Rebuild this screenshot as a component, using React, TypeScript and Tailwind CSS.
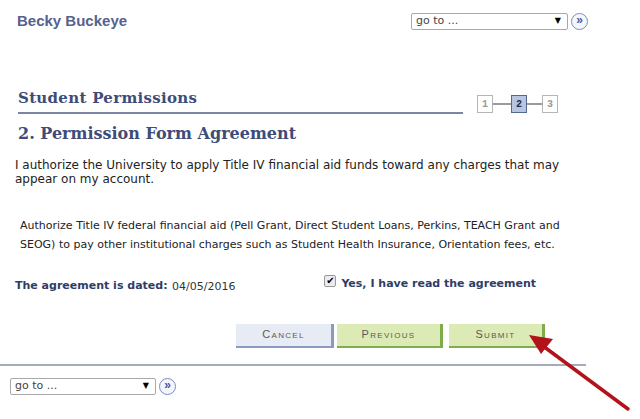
import React from "react";

// PeopleSoft-style permission form, step 2 of 3.

const sans = "font-['DejaVu_Sans',Verdana,sans-serif]";
const serif = "font-['DejaVu_Serif','Liberation_Serif',serif]";

function GoTo({ width }: { width: string }) {
  return (
    <div className="flex items-center gap-[3px]">
      <div
        className={`${width} h-[17px] flex items-center justify-between border border-[#a9a9a9] rounded-[2px] bg-white pl-[4px] pr-[6px] ${sans} text-[11px] text-[#444]`}
      >
        <span>go to ...</span>
        <span className="text-[8px] text-black">▼</span>
      </div>
      <div className="w-[17px] h-[17px] rounded-full border border-[#7b8cc0] bg-[#f4f6fb] flex items-center justify-center text-[#3e5aa8] text-[12px] leading-none font-['Liberation_Sans',sans-serif] font-bold pb-[2px]">
        »
      </div>
    </div>
  );
}

function Steps() {
  const box = "w-[16px] h-[18px] flex items-center justify-center text-[10px] font-bold font-['Liberation_Mono',monospace]";
  return (
    <div className="flex items-center">
      <div className={`${box} border border-[#b5b5b5] text-[#999] bg-white`}>1</div>
      <div className="w-[18px] h-[2px] bg-[#9a9a9a]" />
      <div className={`${box} border border-[#55698f] text-[#1e2d55] bg-[#b7c5e0]`}>2</div>
      <div className="w-[15px] h-[2px] bg-[#9a9a9a]" />
      <div className={`${box} border border-[#b5b5b5] text-[#999] bg-white`}>3</div>
    </div>
  );
}

function Btn({ label, tone }: { label: string; tone: "blue" | "green" }) {
  const cls =
    tone === "blue"
      ? "bg-[#e7ebf3] border-r-[3px] border-b-2 border-[#8d99c4]"
      : "bg-[#dcebb5] border-r-[3px] border-b-2 border-[#7fac4c]";
  return (
    <div
      className={`h-[24px] flex items-center justify-center ${cls} font-['Liberation_Sans',Arial,sans-serif] text-[11px] text-[#5a5a5a] tracking-[0.12em] [font-variant:small-caps]`}
    >
      {label}
    </div>
  );
}

export default function App() {
  return (
    <div className="relative w-[640px] h-[419px] bg-white overflow-hidden">
      {/* Header */}
      <div className="flex items-center justify-between pl-[17px] pr-[52px] pt-[10px]">
        <span className="font-['Liberation_Sans',Arial,sans-serif] font-bold text-[15px] text-[#55628e]">
          Becky Buckeye
        </span>
        <GoTo width="w-[157px]" />
      </div>

      {/* Section title + steps */}
      <div className="flex items-end mt-[54px] pl-[18px]">
        <div className="w-[445px] border-b-2 border-[#7a86a8] pb-[3px]">
          <h1 className={`${serif} font-bold text-[15px] tracking-[0.02em] text-[#3d4c78]`}>
            Student Permissions
          </h1>
        </div>
        <div className="ml-[14px] mb-[1px]">
          <Steps />
        </div>
      </div>

      <h2 className={`pl-[18px] mt-[8px] ${serif} font-bold text-[16px] text-[#3d4c78]`}>
        2. Permission Form Agreement
      </h2>

      <p className={`pl-[15px] w-[580px] mt-[12px] ${sans} text-[12px] leading-[14px] text-[#222]`}>
        I authorize the University to apply Title IV financial aid funds toward any charges that may
        appear on my account.
      </p>

      <p className={`pl-[20px] w-[580px] mt-[30px] ${sans} text-[11px] leading-[19px] text-[#222]`}>
        Authorize Title IV federal financial aid (Pell Grant, Direct Student Loans, Perkins, TEACH Grant and
        SEOG) to pay other institutional charges such as Student Health Insurance, Orientation fees, etc.
      </p>

      {/* Agreement row */}
      <div className={`flex items-center mt-[22px] pl-[15px] ${sans} text-[11px]`}>
        <span className="font-bold text-[#2f3d66] w-[157px]">The agreement is dated:</span>
        <span className="text-[#333] mt-[3px]">04/05/2016</span>
        <div className="flex items-center ml-[89px] mt-[-4px] gap-[5px]">
          <div className="w-[12px] h-[12px] border border-[#999] rounded-[2px] bg-[#ececec] flex items-center justify-center text-[10px] leading-none text-black mt-[-5px]">
            ✔
          </div>
          <span className="font-bold text-[#2f3d66]">Yes, I have read the agreement</span>
        </div>
      </div>

      {/* Buttons */}
      <div className="flex mt-[28px] pl-[236px] gap-[3px]">
        <div className="w-[98px]"><Btn label="Cancel" tone="blue" /></div>
        <div className="w-[106px]"><Btn label="Previous" tone="green" /></div>
        <div className="w-[96px] ml-[3px]"><Btn label="Submit" tone="green" /></div>
      </div>

      <div className="w-[586px] h-[2px] bg-[#a3abbd] mt-[16px]" />

      <div className="pl-[10px] mt-[12px]">
        <GoTo width="w-[146px]" />
      </div>

      {/* Red callout arrow */}
      <svg className="absolute left-0 top-0" width="640" height="419" viewBox="0 0 640 419">
        <line x1="628" y1="409" x2="543" y2="346" stroke="#b3121b" strokeWidth="3.5" strokeLinecap="round" />
        <polygon points="529,335 553,339 541,354" fill="#b3121b" />
      </svg>
    </div>
  );
}
